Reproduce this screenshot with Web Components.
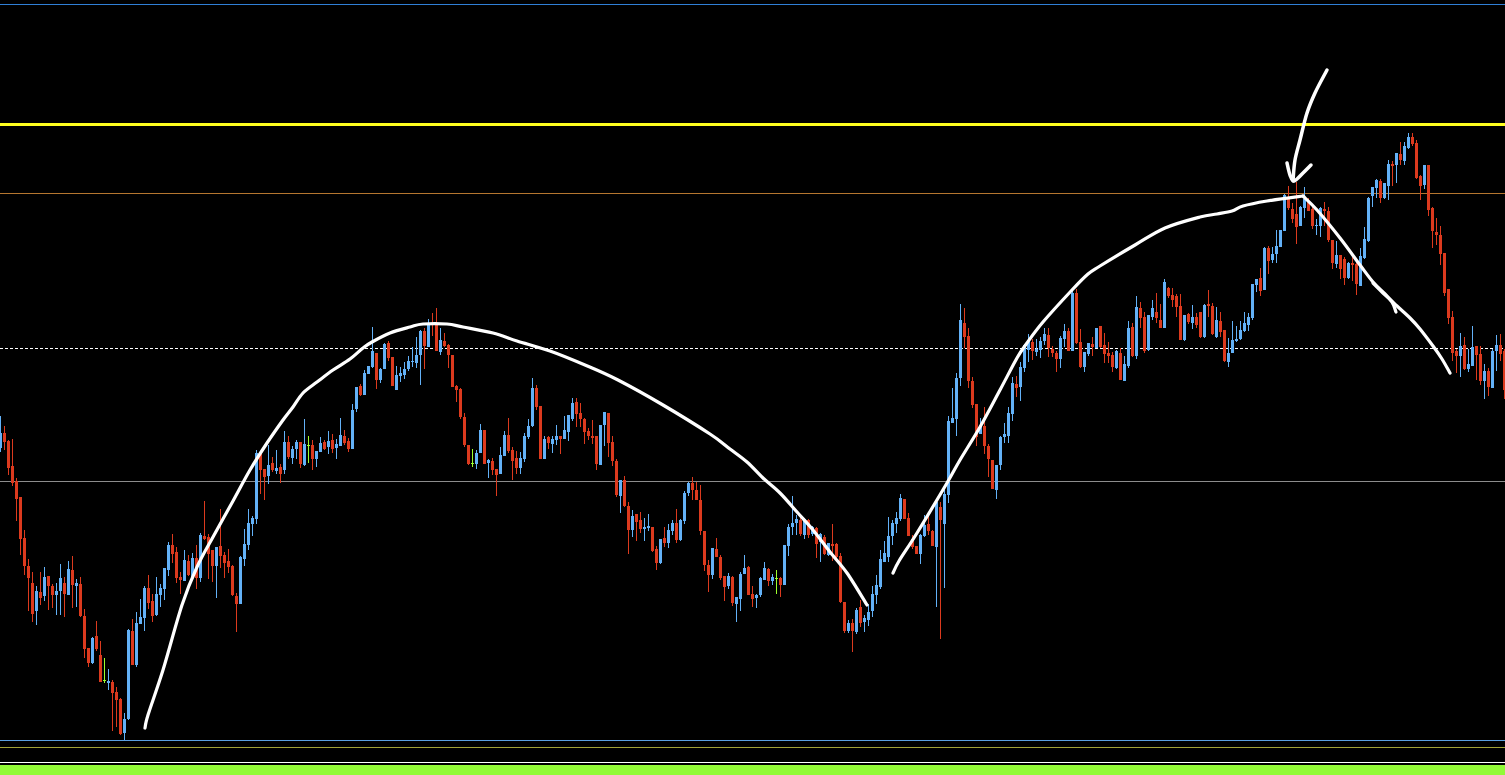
<!DOCTYPE html>
<html>
<head>
<meta charset="utf-8">
<title>Chart</title>
<style>
    html, body { margin: 0; height: 100%; background: black; overflow: hidden; }
</style>
</head>
<body>
<chart-window>
    <price-level y="4" color="#2f7fd6"></price-level>
    <price-level y="123" size="3" color="#ffff1e"></price-level>
    <price-level y="193" color="#b5762f"></price-level>
    <price-level y="348" color="#ffffff" dashed></price-level>
    <price-level y="481" color="#8c8c8c"></price-level>
    <price-level y="740" color="#5a9fe0"></price-level>
    <price-level y="747" color="#a3a336"></price-level>
    <price-level y="762" color="#ffffff"></price-level>

    <candle-series start="0" offset="400" data="
        b48,98,145,155 r78,98,125,150 r120,122,205,225 r117,197,250,258 r235,243,297,363 r291,291,417,465
        r390,414,498,525 r477,498,534,633 r516,549,642,666 b558,573,633,675 r516,576,594,615 b501,531,588,603
        r528,528,558,630 r552,558,585,624 b549,573,585,645 b492,534,573,645 r531,549,582,651 b484,507,585,585
        r468,510,555,624 b537,549,558,621 r531,552,648,651 r627,648,747,774 r744,744,789,801 b711,714,789,792
        r663,708,747,753 r723,765,846,846 g774,841,844,849 b807,843,849,870 r840,846,879,993 r861,876,900,981
        r894,897,1002,1005 b939,957,999,1020 b687,690,957,960 r657,693,795,795 b636,669,795,801 b597,651,672,672
        b558,564,654,693 r525,564,609,627 r582,603,648,666 b531,582,645,648 b552,564,585,621 b504,504,567,600
        b426,435,510,528 r402,435,462,489 r441,456,534,549 r516,531,540,582 b450,480,543,543 r465,483,525,528
        b459,474,534,534 r435,474,534,567 b399,405,534,546 r303,408,417,420 r402,411,462,537 r450,450,498,546
        b441,441,498,594 r327,438,468,504 r456,465,489,534 r447,483,501,519 r495,498,585,588 r579,588,612,696
        b468,471,612,612 b387,432,477,498 b327,369,435,450 b348,354,372,408 b150,159,357,372"></candle-series>
    <candle-series start="65" offset="300" data="
        r460,462,510,582 r507,507,531,600 b435,495,528,552 r471,489,510,516 b450,504,513,522 r492,501,522,549
        b393,426,510,522 r408,426,471,477 b438,447,474,492 b420,426,447,477 r426,426,492,504 b357,432,495,498
        g408,435,438,489 r420,435,477,510 b453,453,477,501 b411,429,456,456 r420,426,447,450 b393,423,441,462
        r402,420,447,459 b417,432,444,477 b354,405,438,438 r390,408,429,435 r414,423,447,456 b312,330,447,447
        b261,261,327,336 r252,258,285,288 b210,219,285,285 b198,198,222,222 b81,153,201,204 r159,159,240,267
        b204,207,240,249 b129,132,207,207 r123,129,174,183 r171,171,258,258 b198,225,270,270 b201,219,228,246
        b186,207,225,237 b168,183,207,213 b141,183,186,201 b111,165,189,204 b90,93,165,255 r84,93,138,207
        b57,72,141,141 r39,72,75,108 r24,72,153,153 b84,120,156,165 r99,123,138,141 r132,135,165,204
        r165,165,261,261 r255,258,270,306 r264,267,351,357 r339,351,435,441 r435,435,492,495 g447,489,492,501
        b450,459,492,507 b372,390,459,459 r390,390,492,492 b477,480,489,534 r474,483,510,525 r507,507,525,588
        b441,465,522,522 b393,405,468,468 r354,405,453,459 r441,450,483,540 r453,474,504,522 b456,474,504,522
        b399,408,477,486 b357,378,411,417 b234,264,378,381 r255,264,321,330 r318,318,477,477 b408,417,477,477
        r408,411,429,447"></candle-series>
    <candle-series start="138" offset="380" data="
        b168,177,192,219 b135,168,180,195 r168,168,177,222 b108,150,177,177 b105,105,156,183 b54,69,117,123
        r54,66,102,141 r69,99,117,141 r114,117,156,192 r144,153,168,180 r120,168,174,192 r168,168,252,270
        b135,135,255,255 b96,96,135,198 r99,99,189,231 r168,186,243,258 r237,243,345,351 b300,300,348,399
        r288,300,378,381 r366,378,450,522 b390,408,450,471 r402,402,426,483 r396,420,447,459 b414,441,447,483
        b402,438,444,453 r441,441,513,516 r498,507,549,570 b477,477,549,552 r441,474,489,501 b432,450,489,504
        b420,429,453,465 r387,429,480,489 b417,420,480,483 b333,339,423,432 b306,309,339,348 r291,309,330,360
        r306,330,360,360 r315,360,453,465 r453,453,555,573 r540,555,585,636 b504,504,585,597 r474,507,531,531
        r525,531,594,600 r588,588,621,663 b579,588,618,627 r588,591,669,678 b651,651,672,726 b576,582,657,693
        b525,564,582,582 r558,561,645,645 r618,642,657,681 b642,645,654,684 b591,594,645,651 b546,564,600,600
        r564,567,603,618 b582,591,603,615 g570,594,597,642 r591,594,615,651 b495,495,615,615 b432,441,498,528
        b348,429,441,465 b405,417,429,465 r408,420,462,468 b414,417,465,477 r417,420,465,474 b438,441,462,468
        r441,444,492,534 b459,462,486,546 r465,471,522,525 b489,489,525,528 r432,492,498,543 r489,492,531,534
        r519,528,666,669 r666,666,753,759 b720,729,753,759 r717,729,753,816 b684,690,756,762 r660,681,729,741
        b705,714,726,756 b672,696,720,738 b618,642,693,711 b585,615,645,672 b510,537,621,627 b483,519,546,546
        b411,468,531,546 b420,429,468,495 b396,414,432,459"></candle-series>
    <candle-series start="225" offset="290" data="
        b612,624,687,693 r627,627,687,687 r669,684,738,738 r735,747,771,777 r768,768,792,792 b732,735,792,822
        b675,705,738,741 r675,702,723,735 r720,723,768,768 b636,636,771,951 r636,651,690,1047 b600,612,702,894
        b378,393,615,639 b294,384,399,399 b249,264,387,438 b42,90,264,288 r54,99,141,174 r114,138,273,294
        r261,273,345,354 r342,342,441,468 b384,408,432,432 r351,408,468,492 r462,468,507,561 r510,510,597,597
        b525,525,600,627 b438,441,525,540 b399,432,441,459 b351,369,438,459 b261,279,372,393 r258,282,294,321
        b216,231,291,333 b162,165,234,246 b132,150,180,216 r147,156,183,210 b147,177,186,198 b141,153,180,204
        b114,132,153,165 r114,135,174,201 r168,177,189,201 r183,189,207,246 b138,144,207,234 b102,123,147,171
        r114,123,183,183 b-3,9,183,183 r-3,9,159,162 r117,156,231,234 b186,186,231,246 b159,159,192,198
        r141,162,171,198 b114,114,174,174 r108,108,171,174 r129,165,192,219 r156,189,198,219 r186,195,231,246
        b180,183,234,237 r174,189,270,270 b198,222,273,273 b93,114,228,234 r99,111,198,201 b18,51,198,207
        r36,54,84,114 r66,81,183,189 b75,75,180,183 b30,54,81,90 r9,66,84,99 r42,90,114,114
        b-33,-24,114,114 r-10,-5,18,24 r-6,15,30,51 r12,18,51,81 r12,48,150,150 b75,75,150,153
        r69,72,96,102 b45,81,99,117 r69,81,105,114"></candle-series>
    <candle-series start="300" offset="60" data="
        r756,756,832,835 b732,735,831,834 r690,732,738,771 r729,738,822,825 b741,780,831,834 r756,783,816,831
        r810,810,903,906 b834,879,906,921 b783,840,879,879 b798,837,843,846 b783,810,837,840 b756,789,813,816
        b759,771,795,813 b672,672,774,780 b657,657,675,696 r624,654,693,708 b561,564,690,690 r558,564,603,642
        b561,582,600,609 b510,558,582,609 b510,510,561,561 b402,405,513,513 r378,417,444,450 r429,447,477,489
        r366,462,501,552 b438,441,498,498 b381,417,444,474 r414,426,453,453 r441,447,498,507 b477,495,498,525
        b441,444,498,531 r426,447,453,498 r441,453,540,546 r540,540,609,627 b543,585,612,624 r585,585,627,657
        r591,597,654,675 b606,609,654,657 r591,609,615,663 r600,612,672,705 b564,588,678,678 b501,537,594,597
        b411,414,543,546 b381,381,408,441 b357,360,384,414 r357,363,414,429 b369,369,414,417 b300,312,378,420
        r303,312,318,378 b279,279,315,369 r246,282,300,315 b246,258,303,315 b219,231,264,267 r219,231,252,258
        r240,249,354,357 r345,348,378,420 b315,315,375,387 r315,315,450,468 r441,444,513,564 r474,516,525,555
        r498,525,582,615 r579,579,699,708 r687,687,774,792 r753,771,879,903 r867,873,888,939 b819,858,888,951
        r831,855,927,930 b867,912,927,936 b798,861,918,918 r858,858,885,960 r858,882,963,975 b912,933,963,1017
        r924,933,981,1008 b867,873,984,984 b825,855,873,933 r822,855,882,903 r867,873,990,1017"></candle-series>

    <!-- hand drawn marks on top of the chart -->
    <pen-stroke points="145,728 148,715 163,670 182,605 197,567 213,537 233,501 250,470 267,443 283,420 293,407 303,393 317,382 333,370 350,359 363,348 372,342 390,333 410,327 423,324 447,324 463,327 493,333 517,341 550,351 585,365 618,380 663,405 710,434 730,449 747,462 763,478 780,493 797,512 813,530 830,552 847,573 867,605"></pen-stroke>
    <pen-stroke points="893,573 899,561 917,533 947,483 960,460 980,427 1000,390 1017,358 1027,343 1043,322 1072,290 1088,274 1100,266 1135,245 1165,228 1200,217 1217,214 1232,211 1243,206 1267,201 1303,196"></pen-stroke>
    <pen-stroke points="1303,196 1317,210 1340,238 1360,265 1373,282 1385,294 1397,306 1410,318 1420,329 1433,346 1442,359 1450,373"></pen-stroke>
    <pen-stroke points="1373,283 1383,293 1392,302 1396,312"></pen-stroke>
    <pen-stroke width="3.5" points="1327,70 1315,93 1307,113 1300,140 1295,160 1293,181"></pen-stroke>
    <pen-stroke width="3.5" points="1287,163 1290,175 1294,181 1303,173 1311,165"></pen-stroke>

    <status-strip slot="strip"></status-strip>
</chart-window>

<script>
const WIDTH = 1505
const HEIGHT = 765

class ChartWindow extends HTMLElement {
    constructor() {
        super()
        this.attachShadow({ mode: 'open' })
        this.shadowRoot.innerHTML = `
            <style>
                :host {
                    display: flex;
                    flex-direction: column;
                    height: 100vh;
                    background: black;
                }
                .plot {
                    position: relative;
                    flex: 1;
                    overflow: hidden;
                }
            </style>
            <div class="plot"><slot></slot></div>
            <slot name="strip"></slot>
        `
    }
}

class StatusStrip extends HTMLElement {
    constructor() {
        super()
        this.attachShadow({ mode: 'open' })
        this.shadowRoot.innerHTML = `
            <style>
                :host {
                    display: block;
                    height: 10px;
                    background: #92fa36;
                }
            </style>
        `
    }
}

class PriceLevel extends HTMLElement {
    constructor() {
        super()
        this.attachShadow({ mode: 'open' })
    }
    connectedCallback() {
        const y = this.getAttribute('y')
        const size = this.getAttribute('size') || 1
        const color = this.getAttribute('color')
        const line = this.hasAttribute('dashed')
            ? `repeating-linear-gradient(to right, ${color} 0 3px, transparent 3px 5px)`
            : color
        this.shadowRoot.innerHTML = `
            <style>
                :host {
                    position: absolute;
                    left: 0;
                    right: 0;
                    top: ${y}px;
                    height: ${size}px;
                    background: ${line};
                }
            </style>
        `
    }
}

// data is "<type><high>,<top>,<bottom>,<low>", values are 1/3 pixel from offset
class CandleSeries extends HTMLElement {
    constructor() {
        super()
        this.attachShadow({ mode: 'open' })
    }
    connectedCallback() {
        const start = Number(this.getAttribute('start'))
        const offset = Number(this.getAttribute('offset'))
        const paths = { r: '', b: '', g: '' }
        const toY = v => Math.round(offset + v / 3)

        this.getAttribute('data').trim().split(/\s+/).forEach((item, index) => {
            const type = item[0]
            const [high, top, bottom, low] = item.slice(1).split(',').map(toY)
            const x = (start + index) * 4
            paths[type] += `M${x} ${high}h1V${low}h-1z`
            paths[type] += `M${x - 1} ${top}h3V${Math.max(bottom, top + 1)}h-3z`
        })

        this.shadowRoot.innerHTML = `
            <style>
                :host {
                    position: absolute;
                    inset: 0;
                }
                svg { display: block; shape-rendering: crispEdges; }
            </style>
            <svg width="${WIDTH}" height="${HEIGHT}" viewBox="0 0 ${WIDTH} ${HEIGHT}">
                <path fill="#dc3a1e" d="${paths.r}"/>
                <path fill="#63b1f7" d="${paths.b}"/>
                <path fill="#9cff2e" d="${paths.g}"/>
            </svg>
        `
    }
}

class PenStroke extends HTMLElement {
    constructor() {
        super()
        this.attachShadow({ mode: 'open' })
    }
    connectedCallback() {
        const pts = this.getAttribute('points').trim().split(/\s+/).map(p => p.split(',').map(Number))
        const width = this.getAttribute('width') || 3.2
        let d = `M${pts[0][0]} ${pts[0][1]}`
        // catmull-rom to bezier so the marks look hand drawn
        for (let i = 0; i < pts.length - 1; i++) {
            const p0 = pts[i - 1] || pts[i]
            const p1 = pts[i]
            const p2 = pts[i + 1]
            const p3 = pts[i + 2] || p2
            const c1x = p1[0] + (p2[0] - p0[0]) / 6
            const c1y = p1[1] + (p2[1] - p0[1]) / 6
            const c2x = p2[0] - (p3[0] - p1[0]) / 6
            const c2y = p2[1] - (p3[1] - p1[1]) / 6
            d += `C${c1x.toFixed(1)} ${c1y.toFixed(1)} ${c2x.toFixed(1)} ${c2y.toFixed(1)} ${p2[0]} ${p2[1]}`
        }
        this.shadowRoot.innerHTML = `
            <style>
                :host {
                    position: absolute;
                    inset: 0;
                }
                svg { display: block; }
            </style>
            <svg width="${WIDTH}" height="${HEIGHT}" viewBox="0 0 ${WIDTH} ${HEIGHT}">
                <path fill="none" stroke="#ffffff" stroke-width="${width}" stroke-linecap="round" stroke-linejoin="round" d="${d}"/>
            </svg>
        `
    }
}

customElements.define('chart-window', ChartWindow)
customElements.define('status-strip', StatusStrip)
customElements.define('price-level', PriceLevel)
customElements.define('candle-series', CandleSeries)
customElements.define('pen-stroke', PenStroke)
</script>
</body>
</html>
